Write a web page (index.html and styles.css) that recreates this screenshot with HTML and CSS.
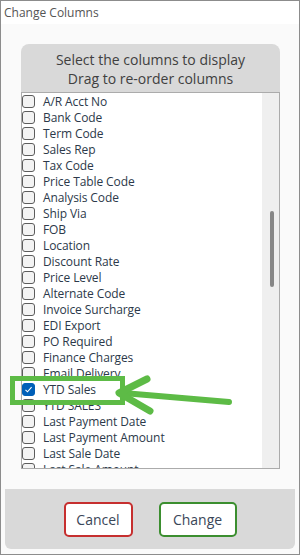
FILE: index.html
```html
<!DOCTYPE html>
<html lang="en">
<head>
    <meta charset="UTF-8">
    <meta name="viewport" content="width=device-width, initial-scale=1.0">
    <title>Change Columns</title>
    <link rel="stylesheet" href="styles.css">
</head>
<body>

    <div class="window">
        <div class="titlebar">Change Columns</div>

        <div class="content">
            <div class="panel">
                <div class="panel-head">
                    Select the columns to display<br>
                    Drag to re-order columns
                </div>
                <div class="list">
                    <div class="items" id="columnList"></div>
                    <div class="scrollbar"><div class="thumb"></div></div>
                </div>
            </div>
        </div>

        <div class="actions">
            <button class="btn cancel">Cancel</button>
            <button class="btn change">Change</button>
        </div>

        <!-- annotation drawn over the dialog -->
        <div class="highlight"></div>
        <svg class="arrow" width="130" height="50" viewBox="0 0 130 50">
            <path d="M13 26 L119 35" stroke="#5dbb46" stroke-width="6" stroke-linecap="round" fill="none"/>
            <path d="M37 12 L9 26 L40 44" stroke="#5dbb46" stroke-width="7" stroke-linecap="round" stroke-linejoin="round" fill="none"/>
        </svg>
    </div>

    <script>
        const columns = [
            "A/R Acct No", "Bank Code", "Term Code", "Sales Rep", "Tax Code",
            "Price Table Code", "Analysis Code", "Ship Via", "FOB", "Location",
            "Discount Rate", "Price Level", "Alternate Code", "Invoice Surcharge",
            "EDI Export", "PO Required", "Finance Charges", "Email Delivery",
            "YTD Sales", "YTD SALES", "Last Payment Date", "Last Payment Amount",
            "Last Sale Date", "Last Sale Amount"
        ];

        const checked = ["YTD Sales"];

        const list = document.getElementById("columnList");

        columns.forEach((name) => {
            const row = document.createElement("div");
            row.classList.add("row");

            const box = document.createElement("span");
            box.classList.add("check");
            if (checked.includes(name)) {
                box.classList.add("on");
                box.innerHTML = '<svg width="9" height="9" viewBox="0 0 9 9"><path d="M1.5 4.8 L3.5 6.8 L7.6 2.2" stroke="#fff" stroke-width="1.1" fill="none"/></svg>';
            }

            const label = document.createElement("span");
            label.textContent = name;

            row.appendChild(box);
            row.appendChild(label);
            list.appendChild(row);
        });
    </script>

</body>
</html>
```

FILE: styles.css
```css
body {
    margin: 0;
    font-family: 'Open Sans', 'Noto Sans', sans-serif;
}

.window {
    position: relative;
    width: 300px;
    height: 555px;
    box-sizing: border-box;
    border: 1px solid #8c8c8c;
    background: #fafafa;
}

.titlebar {
    height: 23px;
    background: #fff;
    color: #555;
    font-size: 12px;
    line-height: 23px;
    padding-left: 3px;
}

.content {
    padding: 20px 19px 20px 20px;
}

.panel {
    display: flex;
    flex-direction: column;
}

.panel-head {
    height: 48px;
    box-sizing: border-box;
    padding-top: 6px;
    background: #d9d9d9;
    border-radius: 8px 8px 0 0;
    text-align: center;
    color: #404040;
    font-size: 14px;
    line-height: 19px;
}

.list {
    display: flex;
    height: 377px;
    box-sizing: border-box;
    border: 1px solid #ababab;
    background: #fff;
}

.items {
    flex: 1;
    overflow: hidden;
}

.row {
    display: flex;
    align-items: center;
    gap: 8px;
    height: 16px;
    font-size: 12px;
    letter-spacing: -0.1px;
    color: #2c394a;
    white-space: nowrap;
}

.check {
    display: inline-flex;
    align-items: center;
    justify-content: center;
    width: 13px;
    height: 13px;
    box-sizing: border-box;
    border: 1px solid #5c5c5c;
    border-radius: 3px;
    background: #f3f3f3;
}

.check.on {
    background: #005fb8;
    border-color: #005fb8;
}

.scrollbar {
    width: 17px;
    background: #efefef;
    display: flex;
    justify-content: center;
}

.thumb {
    width: 4px;
    height: 76px;
    margin-top: 118px;
    margin-left: 2px;
    border-radius: 2px;
    background: #878787;
}

.actions {
    margin: 0 4px;
    height: 60px;
    background: #d9d9d9;
    border-radius: 0 0 6px 6px;
    display: flex;
    justify-content: center;
    align-items: center;
    gap: 26px;
}

.btn {
    height: 35px;
    background: #fff;
    border: 2px solid;
    border-radius: 5px;
    font-family: inherit;
    font-size: 14px;
    color: #3a4658;
    padding: 0;
}

.btn.cancel {
    width: 69px;
    border-color: #c62f2f;
}

.btn.change {
    width: 78px;
    border-color: #3b8e2f;
}

.highlight {
    position: absolute;
    left: 9px;
    top: 375px;
    width: 115px;
    height: 29px;
    box-sizing: border-box;
    border: 5px solid #5dbb46;
}

.arrow {
    position: absolute;
    left: 109px;
    top: 366px;
}
```
